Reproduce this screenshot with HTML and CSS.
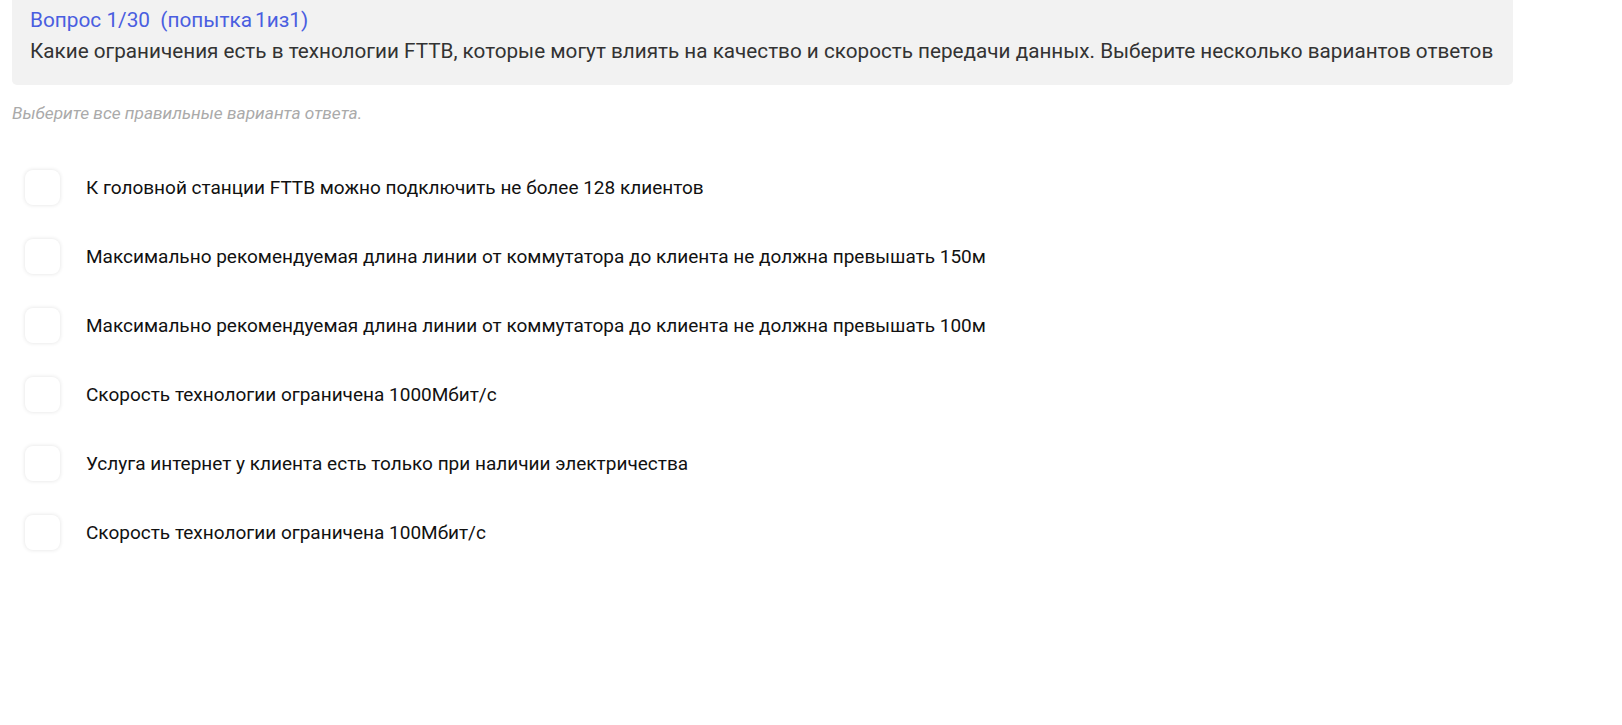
FILE: index.html
```html
<!DOCTYPE html>
<html lang="ru">
<head>
  <meta charset="UTF-8" />
  <meta name="viewport" content="width=device-width, initial-scale=1.0"/>
  <title>тест</title>
  <link rel="stylesheet" href="styles.css">
</head>
<body>

  <div class="quiz">
    <div class="question-box">
      <div class="question-title">Вопрос 1/30&nbsp;&nbsp;(попытка<span class="thin"></span>1из1)</div>
      <div class="question-text">Какие ограничения есть в технологии FTTB, которые могут влиять на качество и скорость передачи данных. Выберите несколько вариантов ответов</div>
    </div>

    <div class="hint">Выберите все правильные варианта ответа.</div>

    <ul class="answers">
      <li class="answer"><span class="check"></span><span class="answer-text">К головной станции FTTB можно подключить не более 128 клиентов</span></li>
      <li class="answer"><span class="check"></span><span class="answer-text">Максимально рекомендуемая длина линии от коммутатора до клиента не должна превышать 150м</span></li>
      <li class="answer"><span class="check"></span><span class="answer-text">Максимально рекомендуемая длина линии от коммутатора до клиента не должна превышать 100м</span></li>
      <li class="answer"><span class="check"></span><span class="answer-text">Скорость технологии ограничена 1000Мбит/с</span></li>
      <li class="answer"><span class="check"></span><span class="answer-text">Услуга интернет у клиента есть только при наличии электричества</span></li>
      <li class="answer"><span class="check"></span><span class="answer-text">Скорость технологии ограничена 100Мбит/с</span></li>
    </ul>
  </div>

  <script>
    // toggle answer checkboxes
    document.querySelectorAll('.answer').forEach(function (row) {
      row.addEventListener('click', function () {
        row.classList.toggle('selected');
      });
    });
  </script>

</body>
</html>
```

FILE: styles.css
```css
body {
  margin: 0;
  font-family: Roboto, 'Liberation Sans', sans-serif;
  background-color: #fff;
  color: #222;
}

.quiz {
  width: 1501px;
  padding: 0 12px;
}

.question-box {
  background-color: #f2f2f2;
  border-radius: 0 0 5px 5px;
  padding: 5px 18px 19px;
}

.question-title {
  color: #4a5ee0;
  font-size: 20.8px;
  line-height: 30px;
}

.question-title .thin {
  display: inline-block;
  width: 3px;
}

.question-text {
  color: #333;
  font-size: 20.7px;
  line-height: 30px;
  margin-top: 1px;
}

.hint {
  margin-top: 17px;
  color: #aaa;
  font-size: 17.3px;
  font-style: italic;
  line-height: 22px;
}

.answers {
  list-style: none;
  margin: 46px 0 0;
  padding: 0 0 10px 13px;
  display: flex;
  flex-direction: column;
  gap: 34px;
}

.answer {
  display: flex;
  align-items: center;
  gap: 26px;
  cursor: pointer;
}

.check {
  width: 35px;
  height: 35px;
  border-radius: 8px;
  background-color: #fff;
  box-shadow: 0 0 4px rgba(0, 0, 0, 0.12);
  flex-shrink: 0;
}

.answer.selected .check {
  background-color: #4a5ee0;
}

.answer-text {
  font-size: 19px;
  line-height: 24px;
  color: #111;
}
```
